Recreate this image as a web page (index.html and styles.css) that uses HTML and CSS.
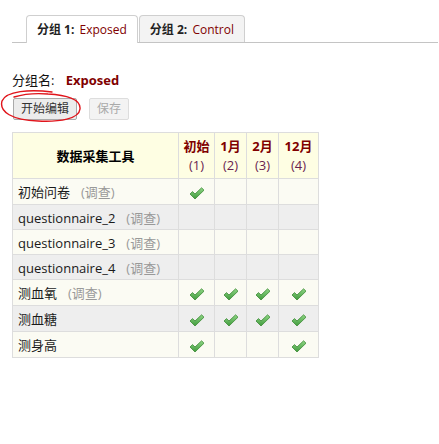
FILE: index.html
```html
<!DOCTYPE html>
<html>
<head>
<meta charset="utf-8">
<link rel="stylesheet" href="styles.css">
</head>
<body>
<div class="page">
  <ul class="tabs">
    <li class="tab active"><b>分组 1:</b> <span class="tname">Exposed</span></li>
    <li class="tab"><b>分组 2:</b> <span class="tname">Control</span></li>
  </ul>
  <div class="groupname">分组名: <span class="gval">Exposed</span></div>
  <div class="buttons">
    <button class="btn">开始编辑</button>
    <button class="btn disabled">保存</button>
  </div>
  <table class="grid">
    <colgroup>
      <col class="c-name"><col class="c-e1"><col class="c-e2"><col class="c-e3"><col class="c-e4">
    </colgroup>
    <thead>
      <tr>
        <th class="hname">数据采集工具</th>
        <th class="hev"><b>初始</b><span>(1)</span></th>
        <th class="hev"><b>1月</b><span>(2)</span></th>
        <th class="hev"><b>2月</b><span>(3)</span></th>
        <th class="hev"><b>12月</b><span>(4)</span></th>
      </tr>
    </thead>
    <tbody>
      <tr class="odd r26"><td class="inst">初始问卷<span class="survey">(调查)</span></td><td><i class="ck"></i></td><td></td><td></td><td></td></tr>
      <tr class="even"><td class="inst">questionnaire_2<span class="survey">(调查)</span></td><td></td><td></td><td></td><td></td></tr>
      <tr class="odd"><td class="inst">questionnaire_3<span class="survey">(调查)</span></td><td></td><td></td><td></td><td></td></tr>
      <tr class="even"><td class="inst">questionnaire_4<span class="survey">(调查)</span></td><td></td><td></td><td></td><td></td></tr>
      <tr class="odd r26"><td class="inst">测血氧<span class="survey">(调查)</span></td><td><i class="ck"></i></td><td><i class="ck"></i></td><td><i class="ck"></i></td><td><i class="ck"></i></td></tr>
      <tr class="even r26"><td class="inst">测血糖</td><td><i class="ck"></i></td><td><i class="ck"></i></td><td><i class="ck"></i></td><td><i class="ck"></i></td></tr>
      <tr class="odd r26"><td class="inst">测身高</td><td><i class="ck"></i></td><td></td><td></td><td><i class="ck"></i></td></tr>
    </tbody>
  </table>
  <svg class="scribble" width="90" height="40" viewBox="0 0 90 40">
    <path d="M52 4 C30 1, 6 3, 2 13 C-1 24, 12 32, 38 33 C60 34, 79 31, 80 21 C81 11, 66 7, 48 6 C36 5, 24 6, 14 9" fill="none" stroke="#e0141b" stroke-width="1.4" stroke-linecap="round"/>
  </svg>
</div>
<svg width="0" height="0" style="position:absolute">
  <defs>
    <linearGradient id="g" x1="0" y1="0" x2="0" y2="1">
      <stop offset="0" stop-color="#8fd685"/>
      <stop offset="1" stop-color="#3f9a3c"/>
    </linearGradient>
  </defs>
</svg>
<script>
document.querySelectorAll('.ck').forEach(function(el){
  el.innerHTML = '<svg width="16" height="13" viewBox="0 0 16 13"><path d="M1 7 L3.5 4.6 L6 7 L12.6 0.8 L15 3.2 L6 12 Z" fill="url(#g)" stroke="#3c8a36" stroke-width="0.8" stroke-linejoin="round"/></svg>';
});
</script>
</body>
</html>
```
FILE: styles.css
```css
html, body { margin: 0; padding: 0; background: #fff; }
body { font-family: "Open Sans", "Noto Sans CJK SC", sans-serif; color: #222; font-size: 13px; }
.page { position: relative; padding: 15px 1px 0 12px; width: 426px; }
.tabs { list-style: none; margin: 0; padding: 0 0 0 14px; display: flex; gap: 1px; border-bottom: 1px solid #c4c4c4; height: 27px; }
.tab { font-size: 12px; line-height: 17px; padding: 5px 10px 4px 10px; border: 1px solid #cfcfcf; border-bottom: none; border-radius: 4px 4px 0 0; background: #f3f3f3; color: #222; height: 17px; white-space: nowrap; }
.tab.active { background: #fff; height: 18px; }
.tab b { font-weight: 700; }
.tname { color: #800000; margin-left: 2px; }
.groupname { margin-top: 28px; line-height: 18px; font-size: 13px; color: #111; }
.gval { font-weight: 700; color: #800000; margin-left: 8px; }
.buttons { display: flex; gap: 12px; margin-top: 9px; padding-left: 1px; }
.btn { font-family: "Open Sans", "Noto Sans CJK SC", sans-serif; font-size: 12px; line-height: 18px; padding: 1px 7px; border: 1px solid #aaa; border-radius: 2px; background: #ececec; color: #333; height: 22px; }
.btn.disabled { border-color: #ddd; background: #f3f3f3; color: #aaa; }
.grid { border-collapse: collapse; margin-top: 12px; table-layout: fixed; width: 306px; border: 1px solid #d0d0d0; }
.c-name { width: 166px; } .c-e1 { width: 36px; } .c-e2 { width: 32px; } .c-e3 { width: 32px; } .c-e4 { width: 40px; }
.grid th, .grid td { border: 1px solid #ddd; padding: 0; }
.grid thead tr { background: #fefee3; height: 46px; }
.hname { font-weight: 700; font-size: 13px; color: #000; text-align: center; }
.hev { text-align: center; font-size: 13px; line-height: 19px; color: #800000; }
.hev b { display: block; font-weight: 700; }
.hev span { display: block; font-weight: 400; color: #6b1f50; }
.grid tbody tr { height: 25px; }
.grid tbody tr.r26 { height: 26px; }
.odd { background: #fbfbf3; }
.even { background: #eeeeee; }
.inst { padding: 0 0 0 5px !important; color: #1a1a1a; white-space: nowrap; }
.survey { color: #999; margin-left: 11px; }
.grid td { text-align: center; vertical-align: middle; }
.grid td.inst { text-align: left; }
.ck { display: inline-block; width: 16px; height: 13px; vertical-align: middle; }
.ck svg { display: block; }
.scribble { position: absolute; left: 0; top: 88px; overflow: visible; }
```
